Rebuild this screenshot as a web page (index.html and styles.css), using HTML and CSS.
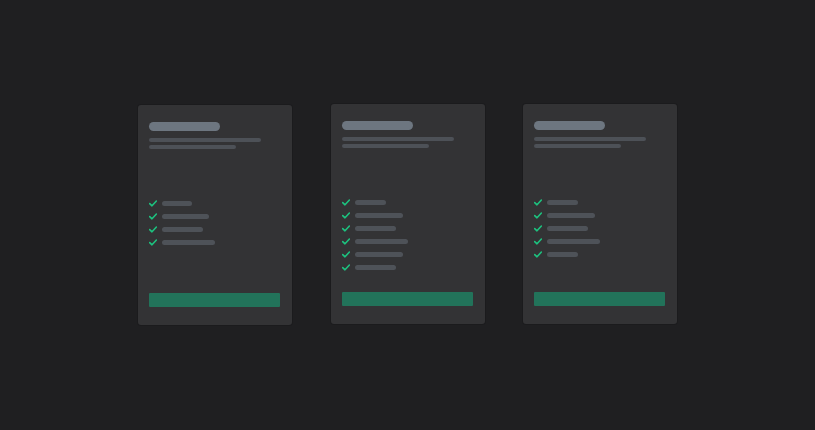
FILE: index.html
```html
<!DOCTYPE html>
<html lang="en">
<head>
<meta charset="utf-8">
<title>Plans</title>
<link rel="stylesheet" href="styles.css">
</head>
<body>
<main class="plans">
  <section class="plan plan--lowered">
    <div class="plan__title"></div>
    <div class="plan__desc">
      <span class="line line--long"></span>
      <span class="line line--short"></span>
    </div>
    <ul class="plan__features">
      <li class="feature"><svg class="check" viewBox="0 0 8 7"><polyline points="0.7,3.6 3,5.8 7.4,1"/></svg><span class="bar w30"></span></li>
      <li class="feature"><svg class="check" viewBox="0 0 8 7"><polyline points="0.7,3.6 3,5.8 7.4,1"/></svg><span class="bar w47"></span></li>
      <li class="feature"><svg class="check" viewBox="0 0 8 7"><polyline points="0.7,3.6 3,5.8 7.4,1"/></svg><span class="bar w41"></span></li>
      <li class="feature"><svg class="check" viewBox="0 0 8 7"><polyline points="0.7,3.6 3,5.8 7.4,1"/></svg><span class="bar w53"></span></li>
    </ul>
    <div class="plan__button"></div>
  </section>

  <section class="plan">
    <div class="plan__title"></div>
    <div class="plan__desc">
      <span class="line line--long"></span>
      <span class="line line--short"></span>
    </div>
    <ul class="plan__features">
      <li class="feature"><svg class="check" viewBox="0 0 8 7"><polyline points="0.7,3.6 3,5.8 7.4,1"/></svg><span class="bar w31"></span></li>
      <li class="feature"><svg class="check" viewBox="0 0 8 7"><polyline points="0.7,3.6 3,5.8 7.4,1"/></svg><span class="bar w48"></span></li>
      <li class="feature"><svg class="check" viewBox="0 0 8 7"><polyline points="0.7,3.6 3,5.8 7.4,1"/></svg><span class="bar w41"></span></li>
      <li class="feature"><svg class="check" viewBox="0 0 8 7"><polyline points="0.7,3.6 3,5.8 7.4,1"/></svg><span class="bar w53"></span></li>
      <li class="feature"><svg class="check" viewBox="0 0 8 7"><polyline points="0.7,3.6 3,5.8 7.4,1"/></svg><span class="bar w48"></span></li>
      <li class="feature"><svg class="check" viewBox="0 0 8 7"><polyline points="0.7,3.6 3,5.8 7.4,1"/></svg><span class="bar w41"></span></li>
    </ul>
    <div class="plan__button"></div>
  </section>

  <section class="plan">
    <div class="plan__title"></div>
    <div class="plan__desc">
      <span class="line line--long"></span>
      <span class="line line--short"></span>
    </div>
    <ul class="plan__features">
      <li class="feature"><svg class="check" viewBox="0 0 8 7"><polyline points="0.7,3.6 3,5.8 7.4,1"/></svg><span class="bar w31"></span></li>
      <li class="feature"><svg class="check" viewBox="0 0 8 7"><polyline points="0.7,3.6 3,5.8 7.4,1"/></svg><span class="bar w48"></span></li>
      <li class="feature"><svg class="check" viewBox="0 0 8 7"><polyline points="0.7,3.6 3,5.8 7.4,1"/></svg><span class="bar w41"></span></li>
      <li class="feature"><svg class="check" viewBox="0 0 8 7"><polyline points="0.7,3.6 3,5.8 7.4,1"/></svg><span class="bar w53"></span></li>
      <li class="feature"><svg class="check" viewBox="0 0 8 7"><polyline points="0.7,3.6 3,5.8 7.4,1"/></svg><span class="bar w31"></span></li>
    </ul>
    <div class="plan__button"></div>
  </section>
</main>
</body>
</html>
```

FILE: styles.css
```css
* {
  box-sizing: border-box;
}

html,
body {
  margin: 0;
  padding: 0;
  height: 100%;
  background: #1f1f21;
  font-family: "Inter", "Liberation Sans", sans-serif;
}

.plans {
  height: 430px;
  display: flex;
  justify-content: center;
  align-items: flex-start;
  gap: 38px;
  padding-top: 104px;
  padding-left: 1px;
}

.plan {
  width: 154px;
  height: 220px;
  background: #333335;
  border-radius: 3px;
  padding: 17px 12px 18px 11px;
  display: flex;
  flex-direction: column;
  box-shadow: 0 0 0 1px rgba(0, 0, 0, 0.12);
}

/* first card sits a touch lower and to the left */
.plan--lowered {
  margin: 1px 1px 0 -1px;
}

.plan__title {
  width: 71px;
  height: 9px;
  border-radius: 5px;
  background: #6d7680;
}

.plan__desc {
  margin-top: 7px;
  display: flex;
  flex-direction: column;
  gap: 3px;
}

.line {
  display: block;
  height: 4px;
  border-radius: 2px;
  background: #4d5157;
}

.line--long {
  width: 112px;
}

.line--short {
  width: 87px;
}

.plan__features {
  list-style: none;
  margin: 51px 0 0;
  padding: 0;
  display: flex;
  flex-direction: column;
  gap: 6px;
}

.feature {
  height: 7px;
  display: flex;
  align-items: center;
  gap: 5px;
}

.check {
  width: 8px;
  height: 7px;
  flex: none;
  fill: none;
  stroke: #1dc27f;
  stroke-width: 1.6;
  stroke-linecap: round;
  stroke-linejoin: round;
}

.bar {
  display: block;
  height: 5px;
  border-radius: 3px;
  background: #4e5258;
}

.w30 { width: 30px; }
.w31 { width: 31px; }
.w41 { width: 41px; }
.w47 { width: 47px; }
.w48 { width: 48px; }
.w53 { width: 53px; }

.plan__button {
  margin-top: auto;
  height: 14px;
  border-radius: 1px;
  background: #22735a;
}
```
